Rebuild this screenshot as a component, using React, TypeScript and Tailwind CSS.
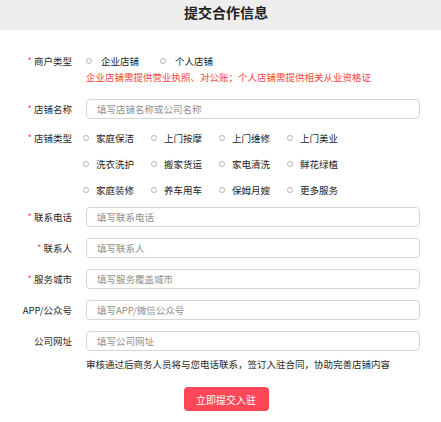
import type { ReactNode } from 'react';

const font = { fontFamily: '"Noto Sans CJK SC", "Noto Sans", sans-serif' };

const shopTypes = [
    '家庭保洁', '上门按摩', '上门维修', '上门美业',
    '洗衣洗护', '搬家货运', '家电清洗', '鲜花绿植',
    '家庭装修', '养车用车', '保姆月嫂', '更多服务',
];

function Label({ text, required }: { text: string; required?: boolean }) {
    return (
        <div className="w-[72px] shrink-0 text-right text-[9.5px] leading-[14px] text-[#2a2a2a]">
            {required && <span className="mr-[2px] text-[#ff4d5e]">*</span>}
            {text}
        </div>
    );
}

function Row({ label, required, children, className = '' }: { label: string; required?: boolean; children: ReactNode; className?: string }) {
    return (
        <div className={`flex items-center ${className}`}>
            <Label text={label} required={required} />
            <div className="ml-[14px] flex-1">{children}</div>
        </div>
    );
}

function Field({ placeholder }: { placeholder: string }) {
    return (
        <input
            placeholder={placeholder}
            className="block h-[20px] w-[334px] rounded-[4px] border border-[#d6d6d6] bg-white pl-[10px] text-[9.5px] text-[#333] outline-none placeholder:text-[#8f8f8f]"
        />
    );
}

function Circle() {
    return <span className="block h-[6px] w-[6px] shrink-0 rounded-full border border-[#b5b5b5] bg-white" />;
}

export default function App() {
    return (
        <div className="w-[441px] h-[422px] bg-white" style={font}>
            {/* Header */}
            <div className="flex h-[30px] justify-center bg-[#eeeeee] pl-[11px] pt-[2px] text-[14px] font-bold leading-[20px] text-[#222]">
                提交合作信息
            </div>

            {/* Merchant type */}
            <Row label="商户类型" required className="mt-[24px] h-[14px]">
                <div className="flex items-center text-[9.5px] leading-[14px] text-[#1a1a1a]">
                    <Circle />
                    <span className="ml-[9px]">企业店铺</span>
                    <span className="ml-[21px]"><Circle /></span>
                    <span className="ml-[9px]">个人店铺</span>
                </div>
            </Row>
            <div className="mt-[2px] pl-[86px] text-[9.5px] leading-[14px] text-[#f2453d]">
                企业店铺需提供营业执照、对公账；个人店铺需提供相关从业资格证
            </div>

            <Row label="店铺名称" required className="mt-[15px]">
                <Field placeholder="填写店铺名称或公司名称" />
            </Row>

            {/* Shop type */}
            <div className="mt-[6px] flex items-start">
                <div className="flex h-[26px] items-center">
                    <Label text="店铺类型" required />
                </div>
                <div className="ml-[11px] grid grid-cols-[68px_68px_68px_68px]">
                    {shopTypes.map((t) => (
                        <div key={t} className="flex h-[26px] items-center text-[9.5px] text-[#222]">
                            <Circle />
                            <span className="ml-[7px]">{t}</span>
                        </div>
                    ))}
                </div>
            </div>

            <div className="mt-[4px] flex flex-col gap-[11px]">
                <Row label="联系电话" required>
                    <Field placeholder="填写联系电话" />
                </Row>
                <Row label="联系人" required>
                    <Field placeholder="填写联系人" />
                </Row>
                <Row label="服务城市" required>
                    <Field placeholder="填写服务覆盖城市" />
                </Row>
                <Row label="APP/公众号">
                    <Field placeholder="填写APP/微信公众号" />
                </Row>
                <Row label="公司网址">
                    <Field placeholder="填写公司网址" />
                </Row>
            </div>

            <div className="mt-[6px] pl-[86px] text-[9.5px] leading-[14px] text-[#2a2a2a]">
                审核通过后商务人员将与您电话联系，签订入驻合同，协助完善店铺内容
            </div>

            <div className="mt-[16px] flex justify-center pl-[11px]">
                <button className="h-[24px] w-[85px] rounded-[4px] bg-[#fd4756] text-[10px] text-white">
                    立即提交入驻
                </button>
            </div>
        </div>
    );
}
